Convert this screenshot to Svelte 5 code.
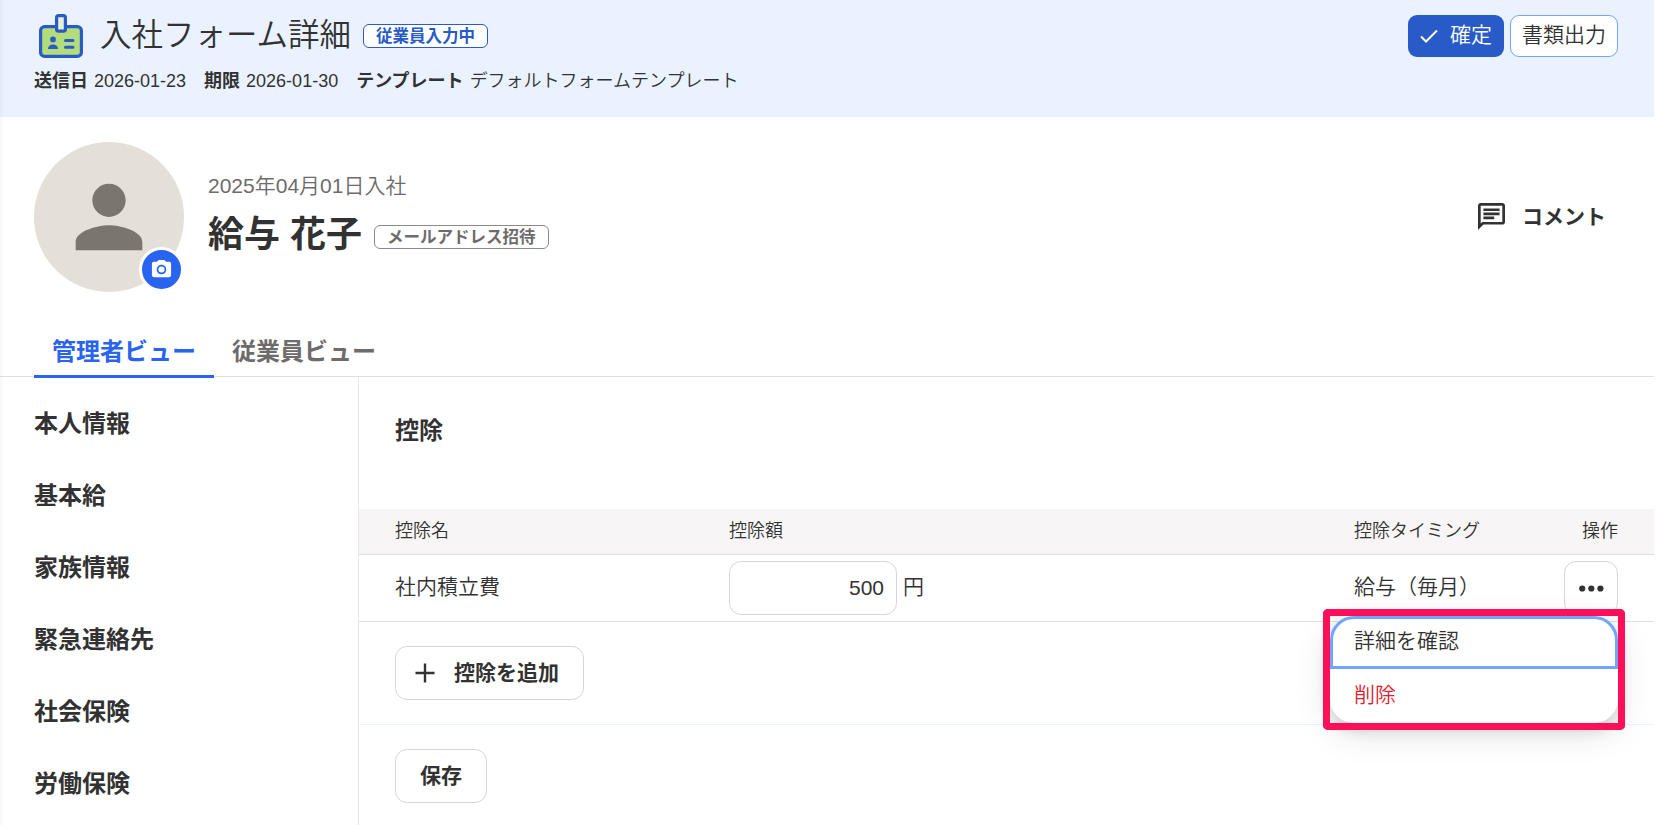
<script lang="ts">
	const sections = ['本人情報', '基本給', '家族情報', '緊急連絡先', '社会保険', '労働保険'];

	const tabs = [
		{ id: 'admin', label: '管理者ビュー' },
		{ id: 'employee', label: '従業員ビュー' }
	];

	const meta = [
		{ label: '送信日', value: '2026-01-23' },
		{ label: '期限', value: '2026-01-30' },
		{ label: 'テンプレート', value: 'デフォルトフォームテンプレート' }
	];

	let activeTab = $state('admin');
	let menuOpen = $state(true);
	let amount = $state('500');
</script>

<div class="page">
	<header class="header">
		<div class="title-row">
			<svg class="title-icon" viewBox="0 0 44 44" width="44" height="44">
				<rect x="1.6" y="12.7" width="40.800" height="29.700" rx="4" fill="#b3dd7c" stroke="#285ac8" stroke-width="3.2" />
				<rect x="17.6" y="1.6" width="8.800" height="15.600" rx="2" fill="#e6f2d6" stroke="#285ac8" stroke-width="3.2" />
				<circle cx="14" cy="25.4" r="2.9" fill="#285ac8" />
				<path d="M9 35c0-3 2-4.6 5-4.6s5 1.600 5 4.600z" fill="#285ac8" />
				<path d="M26.500 26.500h7.500M26.500 33.200h7.500" stroke="#285ac8" stroke-width="3" stroke-linecap="round" />
			</svg>
			<h1>入社フォーム詳細</h1>
			<span class="badge badge-blue">従業員入力中</span>
			<div class="header-actions">
				<button class="btn-primary">
					<svg viewBox="0 0 18 14" width="18" height="14">
						<path d="M1 7.500l5 5L17 1.500" fill="none" stroke="#fff" stroke-width="2" />
					</svg>
					確定
				</button>
				<button class="btn-outline">書類出力</button>
			</div>
		</div>
		<dl class="meta">
			{#each meta as item}
				<div>
					<dt>{item.label}</dt>
					<dd>{item.value}</dd>
				</div>
			{/each}
		</dl>
	</header>

	<section class="profile">
		<div class="avatar">
			<svg viewBox="0 0 24 24" width="100" height="100" fill="#7a766e">
				<path d="M12 12c2.210 0 4-1.790 4-4s-1.790-4-4-4-4 1.790-4 4 1.790 4 4 4zm0 2c-2.670 0-8 1.340-8 4v2h16v-2c0-2.660-5.330-4-8-4z" />
			</svg>
			<button class="avatar-edit" aria-label="写真を変更">
				<svg viewBox="0 0 24 24" width="23" height="23" fill="#fff">
					<path fill-rule="evenodd" d="M9 2 7.170 4H4c-1.100 0-2 .9-2 2v12c0 1.100.9 2 2 2h16c1.100 0 2-.9 2-2V6c0-1.100-.9-2-2-2h-3.170L15 2H9zm3 15c-2.760 0-5-2.240-5-5s2.240-5 5-5 5 2.240 5 5-2.240 5-5 5z" />
					<circle cx="12" cy="12" r="3.200" />
				</svg>
			</button>
		</div>
		<div class="profile-text">
			<p class="joined">2025年04月01日入社</p>
			<div class="name-row">
				<h2>給与 花子</h2>
				<span class="badge badge-gray">メールアドレス招待</span>
			</div>
		</div>
		<button class="comment">
			<svg viewBox="2 2 20 20" width="27" height="27" fill="#323232">
				<path d="M4 4h16v12H5.170L4 17.170V4m0-2c-1.100 0-2 .9-2 2v18l4-4h14c1.100 0 2-.9 2-2V4c0-1.100-.9-2-2-2H4zm2 10h8v2H6v-2zm0-3h12v2H6V9zm0-3h12v2H6V6z" />
			</svg>
			コメント
		</button>
	</section>

	<nav class="tabs">
		{#each tabs as tab}
			<button class="tab" class:active={activeTab === tab.id} onclick={() => (activeTab = tab.id)}>
				{tab.label}
			</button>
		{/each}
	</nav>

	<div class="body">
		<aside class="sidebar">
			{#each sections as section}
				<div class="sidebar-item">{section}</div>
			{/each}
		</aside>

		<main class="content">
			<h3>控除</h3>

			<div class="table">
				<div class="row table-head">
					<span>控除名</span>
					<span>控除額</span>
					<span>控除タイミング</span>
					<span class="ops">操作</span>
				</div>
				<div class="row table-row">
					<span class="cell">社内積立費</span>
					<span class="amount">
						<input type="text" bind:value={amount} />
						<span class="cell">円</span>
					</span>
					<span class="cell">給与（毎月）</span>
					<div class="ops">
						<button class="more" aria-label="操作メニュー" onclick={() => (menuOpen = !menuOpen)}>
							<svg viewBox="0 0 25 7" width="25" height="7" fill="#323232">
								<circle cx="3.200" cy="3.500" r="3.100" />
								<circle cx="12.300" cy="3.500" r="3.100" />
								<circle cx="21.400" cy="3.500" r="3.100" />
							</svg>
						</button>
						{#if menuOpen}
							<div class="menu-frame">
								<div class="menu">
									<button class="menu-item focused">詳細を確認</button>
									<button class="menu-item danger">削除</button>
								</div>
							</div>
						{/if}
					</div>
				</div>
			</div>

			<div class="add-row">
				<button class="btn">
					<svg viewBox="0 0 20 20" width="20" height="20">
						<path d="M10 .5v19M.5 10h19" stroke="#323232" stroke-width="2.400" />
					</svg>
					控除を追加
				</button>
			</div>
			<div class="save-row">
				<button class="btn">保存</button>
			</div>
		</main>
	</div>
</div>

<style>
	:global(body) {
		background: #fff;
		overflow: hidden;
	}

	.page {
		position: relative;
		width: 1654px;
		height: 825px;
		overflow: hidden;
		display: flex;
		flex-direction: column;
		color: #323232;
		font-family: "Liberation Sans", "Noto Sans CJK JP", sans-serif;
		font-size: 21px;
		line-height: 30px;
		font-weight: 350;
	}

	.page::before {
		content: "";
		position: absolute;
		inset: 0 auto 0 0;
		width: 4px;
		background: linear-gradient(to right, rgba(0, 0, 0, 0.03), transparent);
	}

	.page * {
		box-sizing: border-box;
	}

	h1,
	h2,
	h3,
	p,
	dl,
	dd {
		margin: 0;
	}

	button {
		font: inherit;
		color: inherit;
		background: none;
		border: none;
		padding: 0;
		display: flex;
		align-items: center;
		cursor: pointer;
	}

	/* Header */
	.header {
		height: 117px;
		flex: none;
		padding: 14px 36px 0 34px;
		background: #eaf2ff;
	}

	.title-row {
		display: flex;
		height: 44px;
	}

	.title-icon {
		margin: 0 17px 0 5px;
	}

	h1 {
		font-size: 31.5px;
		line-height: 43px;
		font-weight: 350;
	}

	.badge {
		height: 24px;
		padding: 0 12px;
		border: 1px solid;
		border-radius: 6px;
		background: #fff;
		font-size: 16.5px;
		line-height: 22px;
		font-weight: 700;
	}

	.badge-blue {
		margin: 10px 0 0 12px;
		color: #285ac8;
	}

	.badge-gray {
		margin: 12px 0 0 12px;
		color: #6e6b6b;
		border-color: #8c8989;
	}

	.header-actions {
		display: flex;
		gap: 6px;
		margin: 1px 0 0 auto;
	}

	.header-actions button {
		height: 42px;
		border-radius: 9px;
	}

	.header-actions .btn-primary {
		padding: 0 12px 2px;
		gap: 12px;
		background: #285ac8;
		color: #fff;
	}

	.btn-primary svg {
		position: relative;
		top: 1px;
	}

	.header-actions .btn-outline {
		padding: 0 11px 2px;
		border: 1px solid #73a5ff;
		background: #fff;
	}

	.meta {
		display: flex;
		gap: 18px;
		margin-top: 10px;
		font-size: 18px;
		line-height: 27px;
	}

	.meta div {
		display: flex;
		gap: 6px;
	}

	.meta dt {
		font-weight: 700;
	}

	/* Profile */
	.profile {
		display: flex;
		height: 150px;
		flex: none;
		margin: 25px 48px 0 34px;
	}

	.avatar {
		position: relative;
		width: 150px;
		height: 150px;
		padding: 25px;
		border-radius: 50%;
		background: #e4e0d8;
	}

	.avatar svg {
		display: block;
	}

	.avatar-edit {
		position: absolute;
		right: 0;
		bottom: 0;
		width: 45px;
		height: 45px;
		justify-content: center;
		border: 3px solid #fff;
		border-radius: 50%;
		background: #2864f0;
	}

	.profile-text {
		margin: 29px 0 0 24px;
	}

	.joined {
		color: #6e6b6b;
	}

	.name-row {
		display: flex;
		margin-top: 12px;
	}

	h2 {
		font-size: 36px;
		line-height: 44px;
		font-weight: 700;
	}

	.comment {
		margin-left: auto;
		gap: 17px;
		font-weight: 700;
	}

	.comment svg {
		margin-bottom: 1px;
	}

	/* Tabs */
	.tabs {
		display: flex;
		height: 45px;
		flex: none;
		margin-top: 40px;
		padding-left: 34px;
		border-bottom: 1px solid #e1dfdf;
	}

	.tab {
		height: 46px;
		padding: 0 18px 3px;
		border-bottom: 3px solid transparent;
		font-size: 24px;
		font-weight: 700;
		color: #6e6b6b;
	}

	.tab.active {
		color: #2864f0;
		border-bottom-color: #2864f0;
	}

	/* Body */
	.body {
		display: flex;
		flex: 1;
	}

	.sidebar {
		width: 359px;
		padding: 11px 0 0 34px;
		border-right: 1px solid #e9e7e7;
	}

	.sidebar-item {
		height: 72px;
		line-height: 72px;
		font-size: 24px;
		font-weight: 700;
	}

	.content {
		flex: 1;
	}

	h3 {
		height: 132px;
		padding: 36px 0 0 36px;
		font-size: 24px;
		line-height: 36px;
		font-weight: 700;
	}

	.row {
		display: grid;
		grid-template-columns: 334px 625px 1fr auto;
		align-items: center;
		padding: 0 36px;
		border-bottom: 1px solid #e1dfdf;
	}

	.table-head {
		height: 46px;
		padding-bottom: 2px;
		background: #f7f5f5;
		font-size: 18px;
	}

	.table-row {
		height: 67px;
	}

	.cell {
		padding-bottom: 2px;
	}

	.amount {
		display: flex;
		align-items: center;
		gap: 6px;
	}

	input {
		width: 168px;
		height: 54px;
		padding: 0 12px;
		border: 1px solid #d7d5d5;
		border-radius: 12px;
		color: inherit;
		font: inherit;
		text-align: right;
	}

	.ops {
		position: relative;
	}

	.more {
		width: 54px;
		height: 54px;
		justify-content: center;
		border: 1px solid #d7d5d5;
		border-radius: 12px;
	}

	/* Dropdown menu */
	.menu-frame {
		position: absolute;
		top: 48px;
		right: -7px;
		width: 302px;
		height: 121px;
		border: 7px solid #ff0f5a;
		border-radius: 5px;
		z-index: 1;
	}

	.menu {
		height: 107px;
		border-radius: 24px;
		background: #fff;
		box-shadow: 0 9px 36px rgba(0, 0, 0, 0.12), 0 6px 15px rgba(0, 0, 0, 0.14);
	}

	/* keeps the frame above the menu shadow */
	.menu-frame::after {
		content: "";
		position: absolute;
		inset: -7px;
		border: 7px solid #ff0f5a;
		border-radius: 5px;
		pointer-events: none;
	}

	.menu-item {
		width: 100%;
		height: 53px;
		padding: 0 24px 1px;
	}

	.menu-item.focused {
		padding: 0 21px 3px;
		border: 3px solid #73a5ff;
		border-radius: 24px 24px 0 0;
	}

	.menu-item.danger {
		color: #dc1e32;
	}

	/* Buttons below the table */
	.btn {
		height: 54px;
		padding: 0 24px 1px;
		border: 1px solid #d7d5d5;
		border-radius: 12px;
		background: #fff;
		font-weight: 700;
	}

	.btn svg {
		margin: 0 19px 0 -5px;
	}

	.add-row {
		padding: 24px 36px;
		border-bottom: 1px solid #ebf3ff;
	}

	.save-row {
		padding: 24px 36px;
	}
</style>
